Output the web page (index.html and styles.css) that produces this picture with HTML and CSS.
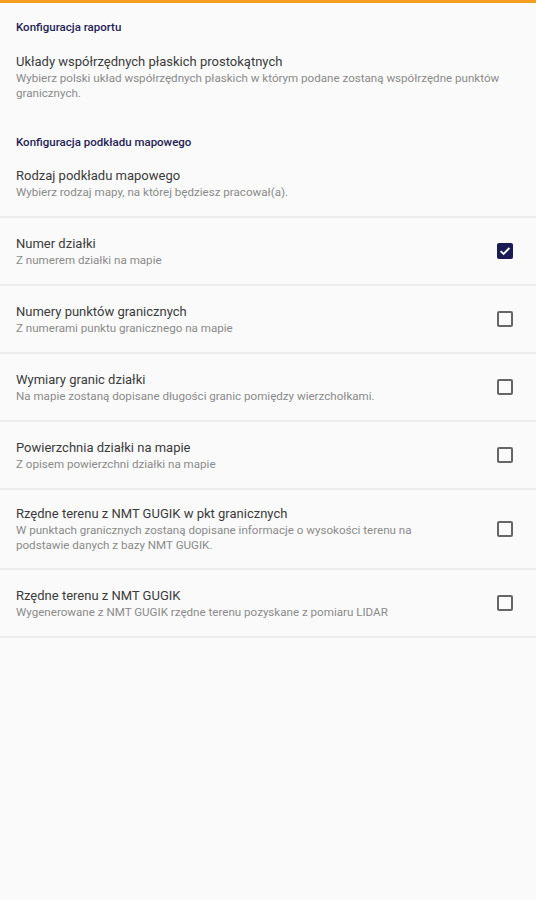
FILE: index.html
```html
<!DOCTYPE html>
<html lang="pl">
<head>
    <meta charset="UTF-8">
    <meta name="viewport" content="width=device-width, initial-scale=1.0">
    <title>Ustawienia</title>
    <link rel="stylesheet" href="styles.css">
</head>
<body>
    <div class="top-bar"></div>

    <div class="category">Konfiguracja raportu</div>
    <div class="pref">
        <div class="pref-text">
            <div class="pref-title">Układy współrzędnych płaskich prostokątnych</div>
            <div class="pref-summary wide">Wybierz polski układ współrzędnych płaskich w którym podane zostaną współrzędne punktów granicznych.</div>
        </div>
    </div>

    <div class="category">Konfiguracja podkładu mapowego</div>
    <div class="pref divided">
        <div class="pref-text">
            <div class="pref-title">Rodzaj podkładu mapowego</div>
            <div class="pref-summary">Wybierz rodzaj mapy, na której będziesz pracował(a).</div>
        </div>
    </div>

    <div class="pref divided">
        <div class="pref-text">
            <div class="pref-title">Numer działki</div>
            <div class="pref-summary">Z numerem działki na mapie</div>
        </div>
        <div class="checkbox checked">
            <svg viewBox="0 0 16 16" width="16" height="16">
                <path d="M3.6 8.2 L6.6 11 L12.4 5" fill="none" stroke="#fff" stroke-width="1.8"/>
            </svg>
        </div>
    </div>

    <div class="pref divided">
        <div class="pref-text">
            <div class="pref-title">Numery punktów granicznych</div>
            <div class="pref-summary">Z numerami punktu granicznego na mapie</div>
        </div>
        <div class="checkbox"></div>
    </div>

    <div class="pref divided">
        <div class="pref-text">
            <div class="pref-title">Wymiary granic działki</div>
            <div class="pref-summary">Na mapie zostaną dopisane długości granic pomiędzy wierzchołkami.</div>
        </div>
        <div class="checkbox"></div>
    </div>

    <div class="pref divided">
        <div class="pref-text">
            <div class="pref-title">Powierzchnia działki na mapie</div>
            <div class="pref-summary">Z opisem powierzchni działki na mapie</div>
        </div>
        <div class="checkbox"></div>
    </div>

    <div class="pref divided">
        <div class="pref-text">
            <div class="pref-title">Rzędne terenu z NMT GUGIK w pkt granicznych</div>
            <div class="pref-summary">W punktach granicznych zostaną dopisane informacje o wysokości terenu na podstawie danych z bazy NMT GUGIK.</div>
        </div>
        <div class="checkbox"></div>
    </div>

    <div class="pref divided">
        <div class="pref-text">
            <div class="pref-title">Rzędne terenu z NMT GUGIK</div>
            <div class="pref-summary">Wygenerowane z NMT GUGIK rzędne terenu pozyskane z pomiaru LIDAR</div>
        </div>
        <div class="checkbox"></div>
    </div>
</body>
</html>
```

FILE: styles.css
```css
body {
    margin: 0;
    background-color: #fafafa;
    font-family: Roboto, "Noto Sans", sans-serif;
    min-height: 900px;
}
.top-bar {
    height: 3px;
    background-color: #f0a01e; /* pomarańczowy pasek u góry */
}
.category {
    padding: 16px 16px 0;
    font-size: 11.5px;
    line-height: 16px;
    font-weight: 500;
    color: #1f1d55;
}
.pref {
    display: flex;
    align-items: center;
    padding: 18px 16px 17px;
}
.pref.divided {
    padding: 15px 16px;
    min-height: 36px;
    border-bottom: 2px solid #ececec;
}
.pref-text {
    flex: 1;
}
.pref-title {
    font-size: 13px;
    line-height: 18px;
    color: #3a3a3a;
}
.pref-summary {
    font-size: 11.6px;
    line-height: 15px;
    color: #8a8a8a;
    padding-right: 60px;
}
.pref-summary.wide {
    padding-right: 0;
}
.checkbox {
    width: 12px;
    height: 12px;
    border: 2px solid #666;
    border-radius: 2px;
    margin-right: 7px;
    flex-shrink: 0;
}
.checkbox.checked {
    width: 16px;
    height: 16px;
    border: none;
    background-color: #1a1a55;
}
.checkbox svg {
    display: block;
}
```
